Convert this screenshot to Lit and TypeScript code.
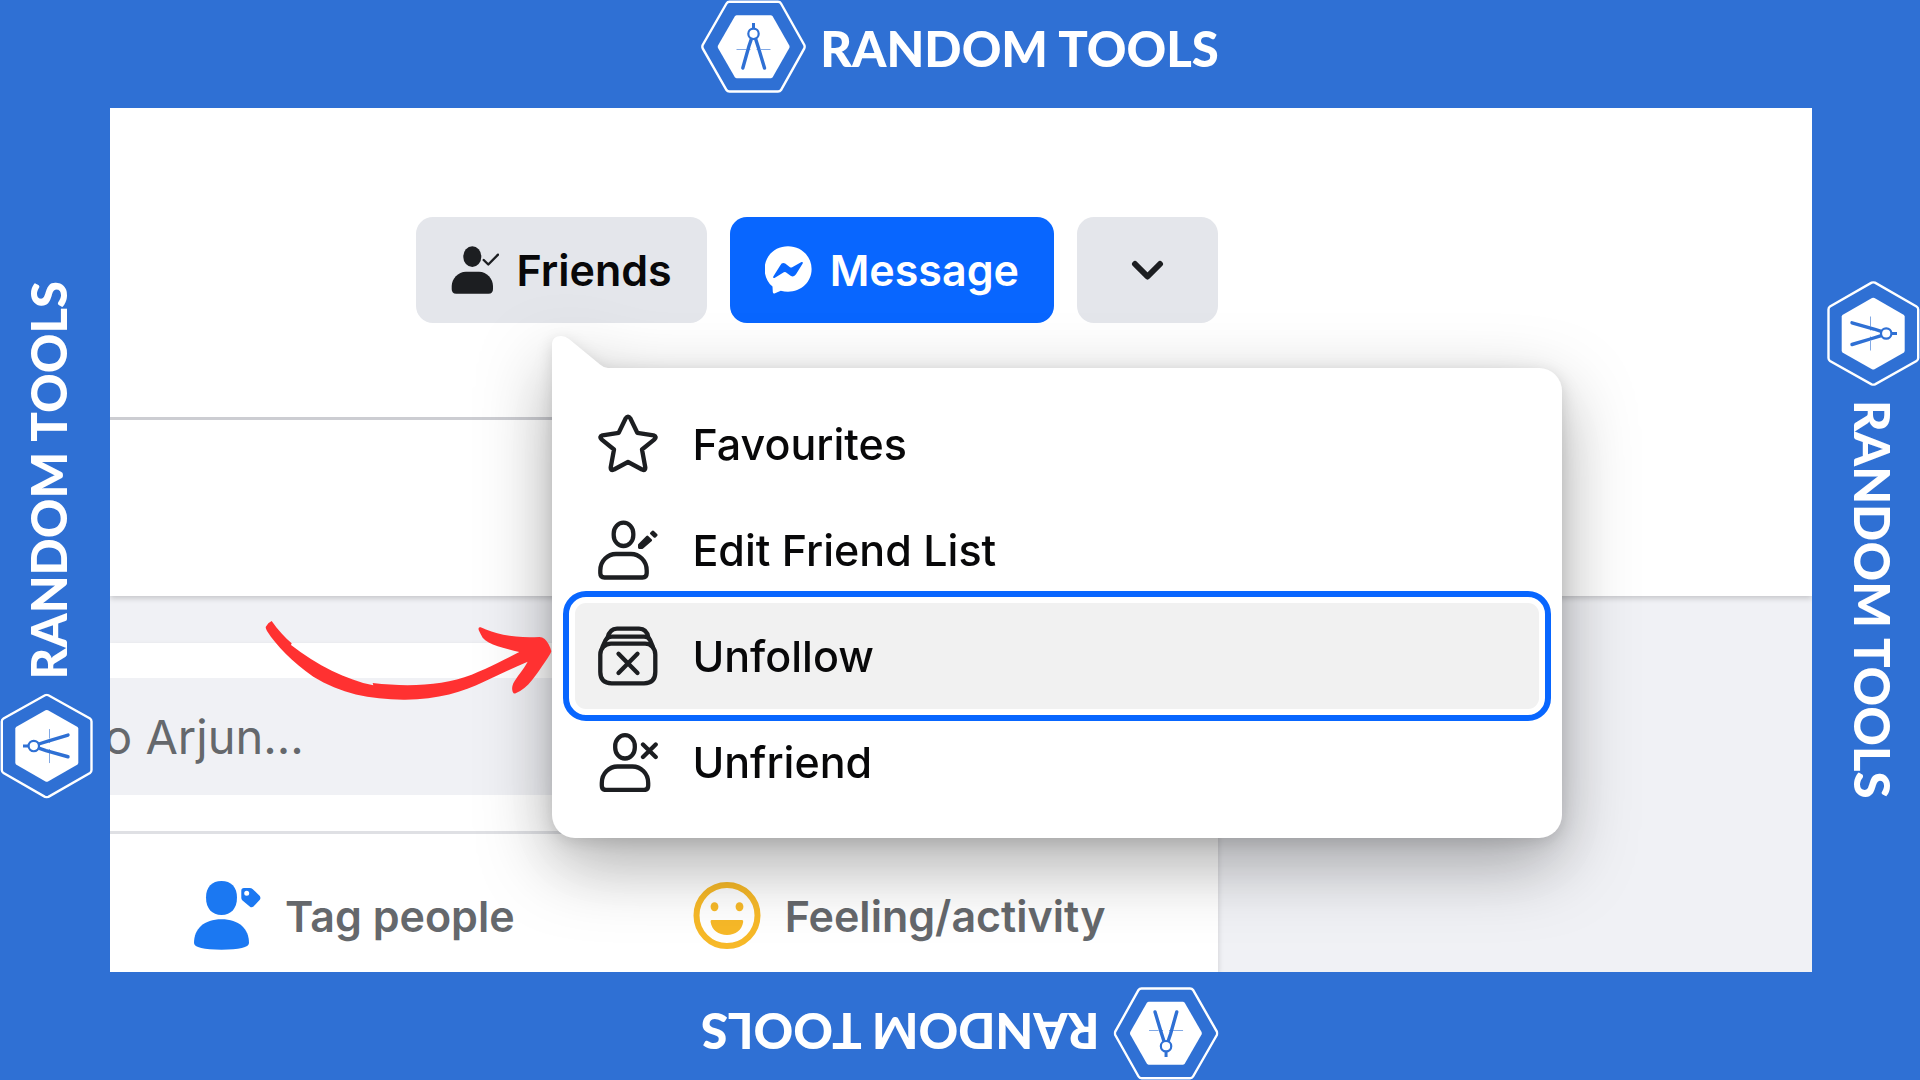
import { LitElement, html, svg, css } from "lit";
import { customElement, property } from "lit/decorators.js";

type Side = "top" | "right" | "bottom" | "left";

@customElement("brand-mark")
class BrandMark extends LitElement {
  @property({ reflect: true }) side: Side = "top";

  static styles = css`
    :host {
      display: flex;
      justify-content: center;
      align-items: flex-start;
      color: #fff;
    }
    .brand {
      display: flex;
      align-items: center;
      gap: 14px;
      font: 900 49px/60px Lato, "Open Sans", sans-serif;
      white-space: nowrap;
    }
    .logo {
      display: block;
      flex: none;
    }
    .name {
      padding-top: 2px;
    }
    :host([side="bottom"]) .brand {
      transform: rotate(180deg);
    }
    :host([side="bottom"]) {
      align-items: flex-end;
    }
    :host([side="left"]),
    :host([side="right"]) {
      align-items: center;
    }
    :host([side="left"]) {
      justify-content: flex-start;
    }
    :host([side="right"]) {
      justify-content: flex-end;
    }
    :host([side="left"]) .brand,
    :host([side="right"]) .brand {
      writing-mode: vertical-rl;
    }
    :host([side="left"]) .brand {
      transform: rotate(180deg);
    }
    :host([side="left"]) .name,
    :host([side="right"]) .name {
      padding: 0 2px 0 0;
    }
  `;

  render() {
    const upright = this.side === "top" || this.side === "bottom";
    const width = upright ? 105 : 93;
    const height = upright ? 93 : 105;
    return html`
      <div class="brand">
        <svg class="logo" width=${width} height=${height} viewBox="0 0 ${width} ${height}" aria-hidden="true">
          <g transform=${upright ? "" : "translate(93 0) rotate(90)"}>
            <path
              d="M28.5 1.8 H77 Q79 1.8 80 3.5 L103.3 45 Q104 46.7 103.3 48.4 L80 90 Q79 91.5 77 91.5 H28.5 Q26.5 91.5 25.5 90 L1.7 48.4 Q1 46.7 1.7 45 L25.5 3.5 Q26.5 1.8 28.5 1.8Z"
              fill="none" stroke="#fff" stroke-width="2.4"
            />
            <path d="M35.5 15.3 H70 L71.5 16 L88.3 45.5 Q88.8 46.7 88.3 48 L71.5 77.6 L70 78.3 H35.5 L34 77.6 L17 48 Q16.5 46.7 17 45.5 L34 16Z" fill="#fff" />
            <g fill="none" stroke="#2f70d4">
              <path d="M35.5 49.5 H45.5 M47.5 49.5 H49.5 M55.5 49.5 H57 M60 49.5 H69.5" stroke-width="1" opacity="0.6" />
              <path d="M52.5 23 V28.5" stroke-width="3" />
              <circle cx="52.5" cy="33.8" r="5.2" stroke-width="2.2" />
              <path d="M50.2 39.5 L48 46 L41.8 68" stroke-width="3.4" stroke-linecap="round" />
              <path d="M54.8 39.5 L57.5 48 L63.5 68" stroke-width="3.4" stroke-linecap="round" />
            </g>
          </g>
        </svg>
        <span class="name">RANDOM TOOLS</span>
      </div>
    `;
  }
}

const personOutline = svg`
  <rect x="15.7" y="2.7" width="19.6" height="23.3" rx="9.8" ry="10.8" />
  <path d="M6.5 57.5 H44.5 Q48.7 57.5 48.7 53.3 V50.5 C48.7 40.5 41 34 33 34 H18 C10 34 2.3 40.5 2.3 50.5 V53.3 Q2.3 57.5 6.5 57.5Z" />
`;

const menuItems = [
  {
    label: "Favourites",
    current: false,
    icon: svg`<path d="M27.6 4.5 Q30 0.8 32.4 4.5 L39.3 18.8 L55.5 21.3 Q59.2 22.5 56.5 25.3 L44 35.5 L47.3 53.5 Q47.5 57.5 44 55.5 L30 48 L16 55.5 Q12.5 57.5 12.7 53.5 L16 35.5 L3.5 25.3 Q0.8 22.5 4.5 21.3 L20.7 18.8Z" />`,
  },
  {
    label: "Edit Friend List",
    current: false,
    icon: svg`${personOutline}
      <path d="M41.3 27.6 L41.3 25 L49.3 17 L52.7 20.3 L44.3 27.6Z M53.3 13.3 L54.8 11.8 L58.2 15 L56.7 16.5Z" fill="currentColor" stroke-width="2.6" />`,
  },
  {
    label: "Unfollow",
    current: true,
    icon: svg`
      <path d="M13 17.7 H47 C53 17.7 57.3 22.5 57.3 28.5 V46 Q57.3 57.3 46 57.3 H13.6 Q2.3 57.3 2.3 46 V28.5 C2.3 22.5 7 17.7 13 17.7Z" />
      <path d="M4.5 21 L7.7 14 Q9.5 10.7 14 10.7 H46 Q50.5 10.7 52 14 L55 21" />
      <path d="M9.5 12 C11 5.5 14 2.7 19 2.7 H41 C46 2.7 49.5 6 50.5 12" />
      <path d="M20.5 27.7 L39.5 47 M39.5 27.7 L20.5 47" />`,
  },
  {
    label: "Unfriend",
    current: false,
    icon: svg`<g transform="translate(1.5 0.5)">${personOutline}</g>
      <path d="M45 12.5 L57.7 25 M57.7 12.5 L45 25" />`,
  },
];

@customElement("app-root")
class AppRoot extends LitElement {
  static styles = css`
    :host {
      display: grid;
      box-sizing: border-box;
      height: 100vh;
      grid-template: 108px minmax(0, 1fr) 108px / 110px minmax(0, 1fr) 108px;
      grid-template-areas:
        "top top top"
        "left page right"
        "bottom bottom bottom";
      background: #2f70d4;
      font-family: Inter, "Liberation Sans", sans-serif;
      overflow: hidden;
    }
    .top {
      grid-area: top;
    }
    .left {
      grid-area: left;
    }
    .right {
      grid-area: right;
    }
    .bottom {
      grid-area: bottom;
    }
    .page {
      grid-area: page;
      display: flex;
      flex-direction: column;
      background: #f0f1f5;
      overflow: hidden;
    }
    .header {
      background: #fff;
      box-shadow: 0 2px 6px rgba(0, 0, 0, 0.2);
      padding-bottom: 176px;
    }
    .column {
      box-sizing: border-box;
      width: 100%;
      max-width: 1108px;
    }
    .actions {
      display: flex;
      justify-content: flex-end;
      gap: 23px;
      padding: 109px 0 94px;
      border-bottom: 3px solid #cccdd2;
    }
    .anchor {
      position: relative;
      z-index: 1;
    }
    button {
      font: inherit;
      color: inherit;
      border: 0;
      margin: 0;
      padding: 0;
      background: none;
      text-align: left;
    }
    svg {
      display: block;
      flex: none;
    }
    .action {
      display: flex;
      align-items: center;
      gap: 17px;
      height: 106px;
      padding: 0 35px;
      border-radius: 17px;
      background: #e4e6eb;
      color: #080809;
      font-size: 43px;
      font-weight: 600;
      line-height: 54px;
    }
    .primary {
      background: #0866ff;
      color: #fff;
    }
    .more {
      padding: 0 54px;
      color: #1c1e21;
    }
    .popover {
      position: absolute;
      left: 136px;
      top: calc(100% + 45px);
      width: 1010px;
    }
    .menu {
      display: flex;
      flex-direction: column;
      padding: 23px;
      border-radius: 0 23px 23px 23px;
      background: #fff;
    }
    .bubble {
      filter: drop-shadow(0 25px 36px rgba(0, 0, 0, 0.3)) drop-shadow(0 4px 8px rgba(0, 0, 0, 0.14));
    }
    .notch {
      position: absolute;
      left: 0;
      bottom: 100%;
    }
    .item {
      display: flex;
      align-items: center;
      gap: 34px;
      height: 106px;
      padding: 0 23px;
      border-radius: 11px;
      color: #080809;
      font-size: 43px;
      font-weight: 500;
      line-height: 54px;
    }
    .item svg {
      color: #1c1e21;
    }
    .item.current {
      background: #f1f1f1;
      outline: 6px solid #0866ff;
      outline-offset: 6px;
    }
    .pointer {
      position: absolute;
      right: 100%;
      top: 247px;
    }
    .card {
      flex: 1;
      margin-top: 47px;
      background: #fff;
      box-shadow: 0 3px 6px rgba(0, 0, 0, 0.15);
      color: #65686c;
    }
    .composer {
      padding: 35px 47px 36px 0;
      border-bottom: 3px solid #dfe0e4;
    }
    .prompt {
      display: block;
      box-sizing: border-box;
      width: 100%;
      height: 117px;
      border-radius: 0 58px 58px 0;
      background: #f0f1f5;
      font-size: 47px;
      line-height: 60px;
      text-indent: -6px;
    }
    .tools {
      display: flex;
      padding: 47px 0 0 84px;
      gap: 178px;
    }
    .tool {
      display: flex;
      align-items: center;
      gap: 24px;
      height: 69px;
      font-size: 43px;
      font-weight: 600;
      line-height: 54px;
      white-space: nowrap;
    }
  `;

  render() {
    return html`
      <brand-mark class="top" side="top"></brand-mark>
      <brand-mark class="left" side="left"></brand-mark>
      <main class="page">
        <header class="header">
          <div class="column actions">
            <div class="anchor">
              <button class="action" aria-haspopup="menu" aria-expanded="true">
                <svg width="48" height="48" viewBox="0 0 48 48" fill="#1c1e21" aria-hidden="true">
                  <rect x="12.3" y="0.3" width="18" height="20.7" rx="9" ry="10" />
                  <path d="M15 25.7 H28 C36 25.7 42 33 42 40 V43 Q42 47.7 37.5 47.7 H5.2 Q0.7 47.7 0.7 43 V40 C0.7 33 7 25.7 15 25.7Z" />
                  <path d="M32.7 14 L37.3 18.5 L47 8.7" fill="none" stroke="#1c1e21" stroke-width="2.4" stroke-linecap="round" stroke-linejoin="round" />
                </svg>
                <span>Friends</span>
              </button>
              ${this.renderMenu()}
            </div>
            <button class="action primary">
              <svg width="48" height="48" viewBox="0 0 48 48" aria-hidden="true">
                <path d="M23 0.3 C36 0.3 46.6 10 46.6 23 C46.6 36 36 45.7 23 45.7 C20.5 45.7 18 45.3 15.8 44.7 L9.5 47.5 Q8 47.8 7.8 46 L7.5 40.5 C2.5 36.5 -0.4 30 -0.4 23 C-0.4 10 10 0.3 23 0.3Z" fill="#fff" />
                <path d="M8.3 30.5 L15.2 19.6 Q17 16 20.2 17.6 L25 21.2 Q26 22 27.2 21.2 L36.5 16 Q38.5 15.5 37.7 17.6 L31 28.3 Q28.8 31.7 25.6 29.7 L20.8 26.3 Q19.8 25.7 18.8 26.3 L9.5 32 Q7.6 32.5 8.3 30.5Z" fill="#0866ff" />
              </svg>
              <span>Message</span>
            </button>
            <button class="action more" aria-label="More">
              <svg width="33" height="20" viewBox="0 0 33 20" aria-hidden="true">
                <path d="M4 4 L16.5 16.5 L29 4" fill="none" stroke="currentColor" stroke-width="6" stroke-linecap="round" stroke-linejoin="round" />
              </svg>
            </button>
          </div>
        </header>
        <section class="column card">
          <div class="composer">
            <button class="prompt">o Arjun...</button>
          </div>
          <div class="tools">
            <button class="tool">
              <svg width="67" height="69" viewBox="0 0 67 69" fill="#1b78f2" aria-hidden="true">
                <path d="M27.5 0 C37 0 43 6 43 16.5 C43 27.5 37 34 27.5 34 C18 34 12 27.5 12 16.5 C12 6 18 0 27.5 0Z" />
                <path d="M27.5 38.3 C45 38.3 55 48 55 62 C55 66.5 45 68.7 27.5 68.7 C10 68.7 0 66.5 0 62 C0 48 10 38.3 27.5 38.3Z" />
                <path fill-rule="evenodd" d="M50 7 H55.5 Q57.5 7 58.8 8.2 L65.8 15 Q67 17 65.8 18.7 L59.5 25.5 Q57.7 27 56 25.8 L48.5 19.5 Q47.3 18.3 47.3 17 V9.7 Q47.3 7 50 7Z M52.7 9.8 A2.5 2.5 0 1 0 52.7 14.8 A2.5 2.5 0 1 0 52.7 9.8Z" />
              </svg>
              <span>Tag people</span>
            </button>
            <button class="tool">
              <svg width="68" height="67" viewBox="0 0 68 67" fill="#f7b928" aria-hidden="true">
                <circle cx="34" cy="33.5" r="30.5" fill="none" stroke="#f7b928" stroke-width="6" />
                <ellipse cx="21.5" cy="24.8" rx="3.9" ry="4.5" />
                <ellipse cx="46.5" cy="24.8" rx="3.9" ry="4.5" />
                <path d="M18.6 38 H49 Q50.5 38 50.2 40 C49 48 42.5 53 34 53 C25.5 53 18.8 48 17.6 40 Q17.3 38 18.6 38Z" />
              </svg>
              <span>Feeling/activity</span>
            </button>
          </div>
        </section>
      </main>
      <brand-mark class="right" side="right"></brand-mark>
      <brand-mark class="bottom" side="bottom"></brand-mark>
    `;
  }

  private renderMenu() {
    return html`
      <div class="popover">
        <div class="bubble">
          <svg class="notch" width="56" height="33" viewBox="0 0 56 33" aria-hidden="true">
            <path d="M0 33 V10 C0 4 3.5 1 9 1 Q13 1 17 4 L48 29.5 Q52 33 56 33Z" fill="#fff" />
          </svg>
          <div class="menu" role="menu">
            ${menuItems.map(
              (item) => html`
                <button class="item ${item.current ? "current" : ""}" role="menuitem">
                  <svg width="60" height="60" viewBox="0 0 60 60" fill="none" stroke="currentColor" stroke-width="4.3" stroke-linecap="round" stroke-linejoin="round" aria-hidden="true">
                    ${item.icon}
                  </svg>
                  <span>${item.label}</span>
                </button>
              `
            )}
          </div>
        </div>
        <svg class="pointer" width="287" height="90" viewBox="495 105 861 270" aria-hidden="true">
          <path
            fill="#ff3131"
            d="M515 123 L505 130 L497 141 Q497 146 501 153 C530 198 575 245 640 290 C720 340 810 358 910 359 C1010 360 1090 335 1150 306 C1195 284 1240 264 1283 245 C1270 270 1250 290 1240 310 Q1234 325 1238 335 Q1241 343 1247 340 C1285 325 1310 282 1335 246 Q1352 222 1354 214 Q1348 190 1334 177 Q1327 171 1318 171 C1250 175 1190 165 1142 142 Q1134 140 1136 150 Q1142 163 1148 173 C1165 195 1215 205 1258 216 C1220 235 1170 262 1115 284 C1030 316 930 322 818 309 L820 316 C740 300 650 255 573 195 L575 190 C555 172 535 152 515 123Z"
          />
        </svg>
      </div>
    `;
  }
}
